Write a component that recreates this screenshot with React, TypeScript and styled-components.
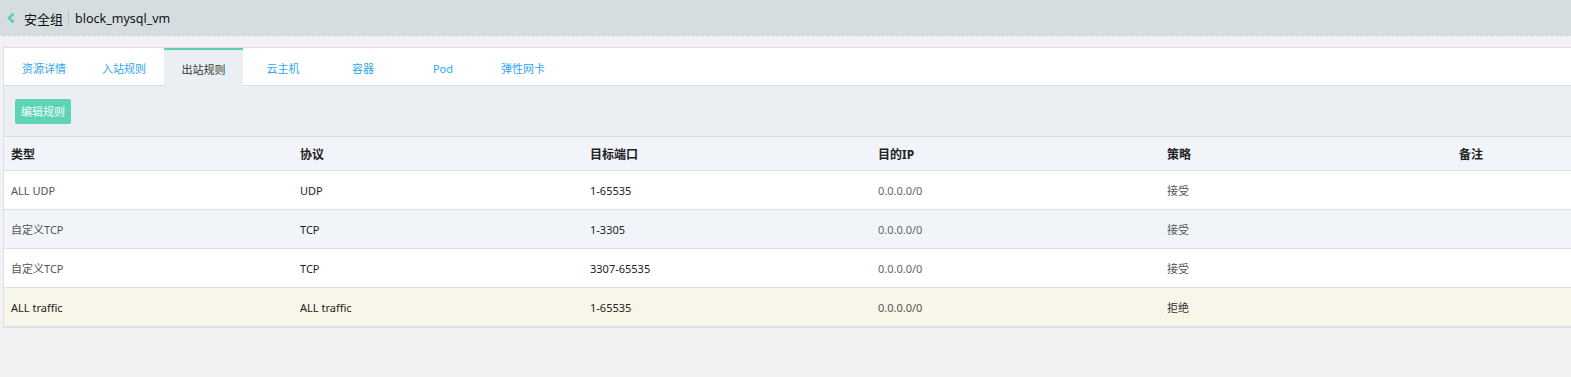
import React from "react";
import styled, { createGlobalStyle } from "styled-components";

const GlobalStyle = createGlobalStyle`
  html, body {
    margin: 0;
    padding: 0;
    background: #f2f2f4;
    font-family: "Noto Sans", "Noto Sans CJK SC", sans-serif;
  }
`;

const Page = styled.div`
  width: 1571px;
  height: 377px;
  overflow: hidden;
  background: #f2f2f4;
`;

const TopBar = styled.div`
  height: 36px;
  display: flex;
  align-items: center;
  padding-left: 6px;
  background: #d6dde0;
  border-bottom: 1px dashed #f4f6f7;
`;

const BackIcon = styled.svg`
  width: 10px;
  height: 12px;
  margin-right: 8px;
`;

const Crumb = styled.span`
  font-size: 13px;
  color: #111;
`;

const Divider = styled.span`
  width: 1px;
  height: 16px;
  background: #bfc6ca;
  margin: 0 6px 0 5px;
`;

const Name = styled.span`
  font-size: 12.5px;
  color: #111;
`;

const Panel = styled.div`
  margin: 10px 0 0 3px;
  border: 1px solid #dcdfe4;
  border-right: none;
  background: #ebeff3;
`;

const Tabs = styled.div`
  display: flex;
  height: 37px;
  background: #fff;
  border-bottom: 1px solid #d8dde3;
`;

const Tab = styled.div<{ $active?: boolean; $w: number }>`
  width: ${({ $w }) => $w}px;
  display: flex;
  align-items: center;
  justify-content: center;
  font-size: 11px;
  box-sizing: border-box;
  color: ${({ $active }) => ($active ? "#333" : "#2ea7ee")};
  background: ${({ $active }) => ($active ? "#ebeff3" : "#fff")};
  border-top: 2px solid ${({ $active }) => ($active ? "#5ccfb6" : "transparent")};
  margin-bottom: ${({ $active }) => ($active ? "-1px" : "0")};
  padding-top: 1px;
`;

const Toolbar = styled.div`
  height: 50px;
  display: flex;
  align-items: center;
  padding-left: 11px;
  border-bottom: 1px solid #d8dde3;
`;

const Button = styled.button`
  height: 25px;
  width: 56px;
  border: none;
  border-radius: 2px;
  background: #5fd3b6;
  color: #f4fffb;
  font-family: inherit;
  font-size: 11px;
  padding: 0;
`;

const Row = styled.div<{ $bg: string; $head?: boolean }>`
  display: grid;
  grid-template-columns: 289px 290px 288px 289px 292px 1fr;
  height: ${({ $head }) => ($head ? "33px" : "38px")};
  align-items: center;
  padding-left: 7px;
  background: ${({ $bg }) => $bg};
  border-bottom: 1px solid #dde1e7;
  font-size: ${({ $head }) => ($head ? "12px" : "11px")};
  font-weight: ${({ $head }) => ($head ? 700 : 400)};
  color: #222;
`;

const Cell = styled.div<{ $tone?: string }>`
  color: ${({ $tone }) => $tone || "inherit"};
  white-space: nowrap;
`;

const tabs = [
  { label: "资源详情", w: 80 },
  { label: "入站规则", w: 80 },
  { label: "出站规则", w: 79, active: true },
  { label: "云主机", w: 80 },
  { label: "容器", w: 80 },
  { label: "Pod", w: 80 },
  { label: "弹性网卡", w: 80 },
];

const rules = [
  { type: "ALL UDP", proto: "UDP", port: "1-65535", ip: "0.0.0.0/0", policy: "接受", bg: "#fff", dark: false },
  { type: "自定义TCP", proto: "TCP", port: "1-3305", ip: "0.0.0.0/0", policy: "接受", bg: "#f1f5f9", dark: false },
  { type: "自定义TCP", proto: "TCP", port: "3307-65535", ip: "0.0.0.0/0", policy: "接受", bg: "#fff", dark: false },
  { type: "ALL traffic", proto: "ALL traffic", port: "1-65535", ip: "0.0.0.0/0", policy: "拒绝", bg: "#f8f6e9", dark: true },
];

export default function App() {
  return (
    <Page>
      <GlobalStyle />
      <TopBar>
        <BackIcon viewBox="0 0 10 12">
          <path d="M7.5 1.5 L3 6 L7.5 10.5" fill="none" stroke="#5ccfb6" strokeWidth="2.6" />
        </BackIcon>
        <Crumb>安全组</Crumb>
        <Divider />
        <Name>block_mysql_vm</Name>
      </TopBar>
      <Panel>
        <Tabs>
          {tabs.map((t) => (
            <Tab key={t.label} $w={t.w} $active={t.active}>
              {t.label}
            </Tab>
          ))}
        </Tabs>
        <Toolbar>
          <Button>编辑规则</Button>
        </Toolbar>
        <Row $bg="#f1f5f9" $head>
          <Cell>类型</Cell>
          <Cell>协议</Cell>
          <Cell>目标端口</Cell>
          <Cell>目的IP</Cell>
          <Cell>策略</Cell>
          <Cell>备注</Cell>
        </Row>
        {rules.map((r, i) => (
          <Row key={i} $bg={r.bg}>
            <Cell $tone={r.dark ? "#222" : "#555"}>{r.type}</Cell>
            <Cell $tone="#222">{r.proto}</Cell>
            <Cell $tone="#222">{r.port}</Cell>
            <Cell $tone={r.dark ? "#555" : "#666"}>{r.ip}</Cell>
            <Cell $tone={r.dark ? "#333" : "#555"}>{r.policy}</Cell>
            <Cell />
          </Row>
        ))}
      </Panel>
    </Page>
  );
}
